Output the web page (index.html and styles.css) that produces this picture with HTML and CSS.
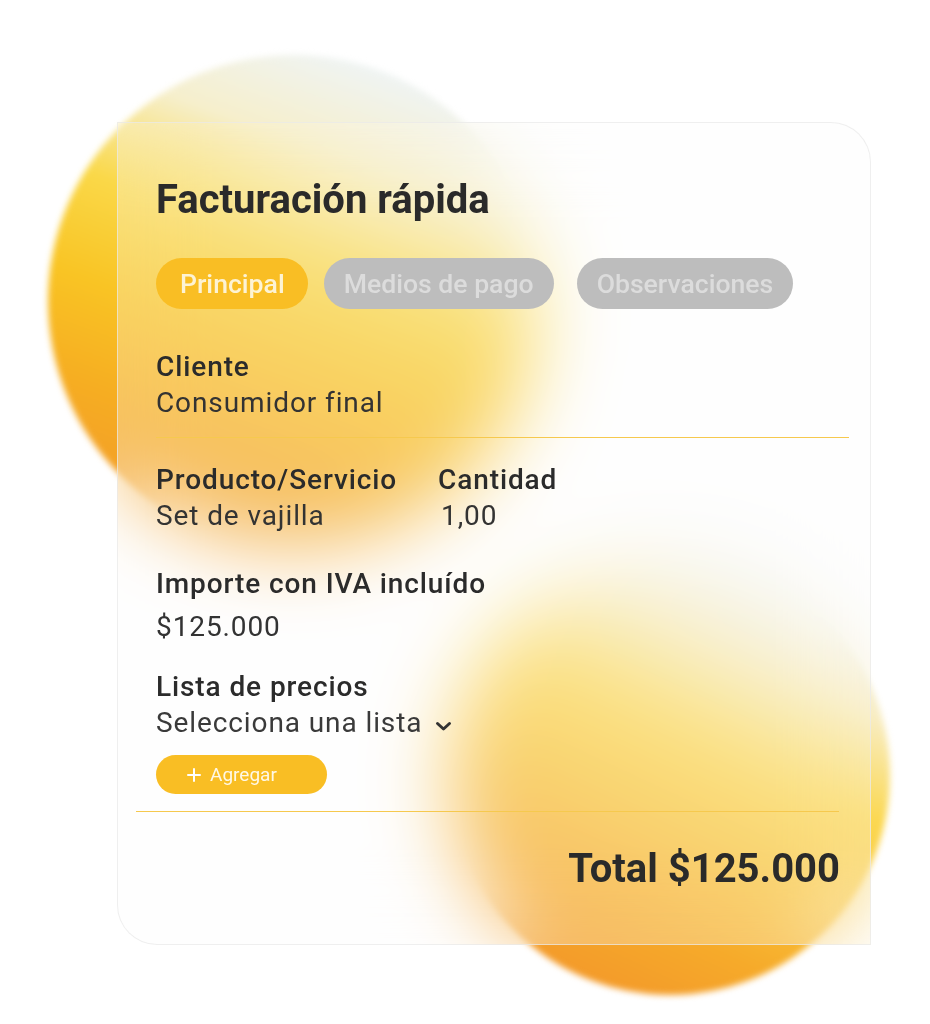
FILE: index.html
```html
<!DOCTYPE html>
<html lang="es">
<head>
<meta charset="utf-8">
<title>Facturación rápida</title>
<link rel="stylesheet" href="styles.css">
</head>
<body>
<div class="stage">
  <div class="blob blob-a"></div>
  <div class="blob blob-b"></div>
  <section class="card">
    <h1 class="title">Facturación rápida</h1>
    <nav class="tabs">
      <span class="tab tab-active">Principal</span>
      <span class="tab">Medios de pago</span>
      <span class="tab tab-last">Observaciones</span>
    </nav>
    <div class="field field-client">
      <div class="label">Cliente</div>
      <div class="value">Consumidor final</div>
    </div>
    <div class="divider"></div>
    <div class="row">
      <div class="field col-product">
        <div class="label">Producto/Servicio</div>
        <div class="value">Set de vajilla</div>
      </div>
      <div class="field col-qty">
        <div class="label">Cantidad</div>
        <div class="value qty">1,00</div>
      </div>
    </div>
    <div class="field field-amount">
      <div class="label">Importe con IVA incluído</div>
      <div class="value amount">$125.000</div>
    </div>
    <div class="field field-list">
      <div class="label">Lista de precios</div>
      <div class="value select">Selecciona una lista
        <svg class="chev" width="17" height="11" viewBox="0 0 17 11"><polyline points="2.5,2.5 8.5,8 14.5,2.5" fill="none" stroke="#333" stroke-width="3" stroke-linecap="round" stroke-linejoin="round"/></svg>
      </div>
    </div>
    <button class="add">
      <svg class="plus" width="14" height="14" viewBox="0 0 14 14"><path d="M7 1v12M1 7h12" stroke="#fff" stroke-width="2" stroke-linecap="round"/></svg>
      <span>Agregar</span>
    </button>
    <div class="divider divider-bottom"></div>
    <div class="total">Total $125.000</div>
  </section>
</div>
</body>
</html>
```

FILE: styles.css
```css
* { box-sizing: border-box; }
html, body { margin: 0; padding: 0; background: #ffffff; }
body { font-family: Roboto, "Noto Sans", "Liberation Sans", sans-serif; color: #2b2b2b; }

.stage {
  position: relative;
  width: 930px;
  height: 1024px;
  overflow: hidden;
  background: #ffffff;
}

.blob {
  position: absolute;
  border-radius: 50%;
  z-index: 0;
  filter: blur(3px);
}
.blob-a {
  left: 48px;
  top: 55px;
  width: 492px;
  height: 492px;
  background: linear-gradient(200deg, #eef5fb 8%, #f6efcc 26%, #fad848 42%, #f9c424 58%, #f6ad22 74%, #f29a2a 92%);
}
.blob-b {
  left: 450px;
  top: 555px;
  width: 440px;
  height: 440px;
  background: linear-gradient(205deg, #eef4fa 10%, #f8edc4 26%, #fbd852 42%, #f9c43a 58%, #f6aa2a 74%, #f3982a 90%);
}

.card {
  position: relative;
  z-index: 1;
  margin: 122px 0 0 117px;
  width: 754px;
  height: 823px;
  padding: 54px 21px 0 38px;
  border: 1px solid rgba(232, 232, 232, 0.7);
  border-radius: 0 40px 0 40px;
  background: rgba(250, 250, 250, 0.28);
  -webkit-backdrop-filter: blur(40px);
  backdrop-filter: blur(40px);
}

.title {
  margin: 0;
  font-size: 40px;
  line-height: 46px;
  font-weight: 700;
  color: #2a2a2a;
}

.tabs {
  display: flex;
  gap: 16px;
  margin-top: 35px;
}
.tab {
  display: inline-block;
  height: 51px;
  line-height: 51px;
  padding: 0 20px;
  border-radius: 26px;
  background: #bdbdbd;
  color: #dcdcdc;
  font-size: 26.6px;
  font-weight: 500;
  white-space: nowrap;
}
.tab-active {
  background: #f9be24;
  color: #fdf3d4;
  padding: 0 23px 0 24px;
}
.tab-last { margin-left: 7px; }

.field { display: flex; flex-direction: column; }
.label {
  font-size: 28px;
  line-height: 36px;
  font-weight: 500;
  letter-spacing: 0.9px;
  color: #2b2b2b;
  white-space: nowrap;
}
.value {
  font-size: 28px;
  line-height: 36px;
  font-weight: 400;
  letter-spacing: 0.9px;
  color: #333333;
  white-space: nowrap;
}
.field-client { margin-top: 40px; }

.divider {
  margin: 16px 0 0 0;
  height: 1px;
  background: #f6c94e;
}
.divider-bottom {
  margin: 17px 10px 0 -20px;
}

.row { display: flex; margin-top: 24px; }
.col-product { width: 282px; }
.qty { padding-left: 3px; }

.field-amount { margin-top: 32px; }
.amount { margin-top: 7px; }
.field-list { margin-top: 24px; }
.select { display: flex; align-items: center; color: #3a3a3a; }
.chev { margin-left: 13px; margin-top: 6px; }

.add {
  display: flex;
  align-items: center;
  gap: 9px;
  width: 171px;
  height: 39px;
  margin-top: 14px;
  padding: 0 0 0 31px;
  border: 0;
  border-radius: 20px;
  background: #f9be24;
  color: #fff8e6;
  font-family: inherit;
  font-size: 19px;
  font-weight: 400;
  cursor: pointer;
}
.plus { flex: none; }

.total {
  margin-top: 34px;
  padding-right: 9px;
  text-align: right;
  font-size: 40px;
  line-height: 46px;
  font-weight: 700;
  color: #2a2a2a;
}
```
